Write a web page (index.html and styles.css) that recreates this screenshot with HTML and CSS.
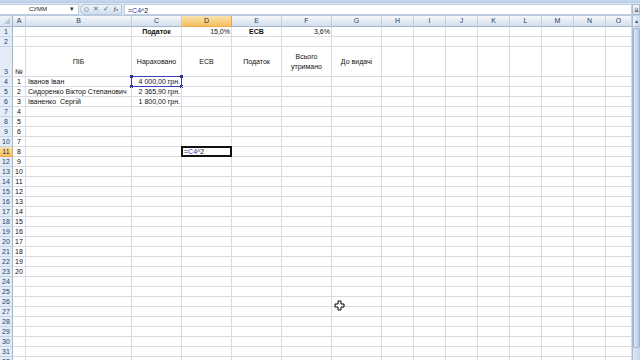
FILE: index.html
```html
<!DOCTYPE html>
<html lang="uk">
<head>
    <meta charset="UTF-8">
    <meta name="viewport" content="width=device-width, initial-scale=1.0">
    <title>Зарплата</title>
    <link rel="stylesheet" href="styles.css">
</head>
<body>
    <div class="app">
        <div class="ribbon"></div>
        <div class="fbar">
            <div class="namebox">
                <span class="name">СУММ</span>
                <span class="drop">&#9662;</span>
            </div>
            <div class="fbtns">
                <span class="grip"></span>
                <span class="fb x">&#10005;</span>
                <span class="fb ok">&#10003;</span>
                <span class="fb fx"><i>f</i><small>x</small></span>
            </div>
            <div class="formula">=<span class="ref">C4</span>^2</div>
            <div class="expand">&#8650;</div>
        </div>
        <div class="main">
            <div class="sheet" id="sheet"></div>
            <div class="vscroll">
                <div class="up">&#9652;</div>
                <div class="thumb"></div>
            </div>
        </div>
        <svg class="cursor" width="11" height="11" viewBox="0 0 11 11">
            <path d="M4 1h3v3h3v3h-3v3h-3v-3h-3v-3h3z" fill="#fff" stroke="#000" stroke-width="1"/>
        </svg>
    </div>
    <script>
        var cols = ["A", "B", "C", "D", "E", "F", "G", "H", "I", "J", "K", "L", "M", "N", "O"];
        var rowsCount = 32;
        var cells = {
            C1: { t: "Податок", c: "b mid" },
            D1: { t: "15,0%", c: "num" },
            E1: { t: "ЕСВ", c: "b mid" },
            F1: { t: "3,6%", c: "num" },
            A3: { t: "№", c: "mid bottom" },
            B3: { t: "ПІБ", c: "mid vmid" },
            C3: { t: "Нараховано", c: "mid vmid" },
            D3: { t: "ЕСВ", c: "mid vmid" },
            E3: { t: "Податок", c: "mid vmid" },
            F3: { t: "Всього утримано", c: "mid vmid wrap" },
            G3: { t: "До видачі", c: "mid vmid" },
            B4: { t: "Іванов Іван" },
            C4: { t: "4 000,00 грн.", c: "num refbox" },
            B5: { t: "Сидоренко Віктор Степанович" },
            C5: { t: "2 365,90 грн.", c: "num" },
            B6: { t: "Іваненко &nbsp;Сергій" },
            C6: { t: "1 800,00 грн.", c: "num" },
            D11: { t: "=<span class=\"ref\">C4</span>^2", c: "active" }
        };
        for (let n = 1; n <= 20; n++) {
            cells["A" + (n + 3)] = { t: String(n), c: "mid" };
        }

        let str = `<div class="corner"><span></span></div>`;
        for (let i = 0; i < cols.length; i++) {
            let sel = cols[i] == "D" ? " hsel" : "";
            str += `<div class="ch${sel}">${cols[i]}</div>`;
        }
        for (let r = 1; r <= rowsCount; r++) {
            let sel = r == 11 ? " hsel" : "";
            let tall = r == 3 ? " bottom" : "";
            str += `<div class="rh${sel}${tall}">${r}</div>`;
            for (let i = 0; i < cols.length; i++) {
                let cell = cells[cols[i] + r];
                if (cell) {
                    let extra = cell.c == "num refbox" ? `<i class="h tl"></i><i class="h tr"></i><i class="h bl"></i><i class="h br"></i>` : "";
                    str += `<div class="cell ${cell.c || ""}"><span>${cell.t}</span>${extra}</div>`;
                } else {
                    str += `<div class="cell"></div>`;
                }
            }
        }
        document.getElementById("sheet").innerHTML = str;
    </script>
</body>
</html>
```

FILE: styles.css
```css
body {
    margin: 0;
    overflow: hidden;
    background: #fff;
    font-family: 'Liberation Sans', Arial, sans-serif;
    font-size: 7px;
    color: #000;
}
.app {
    position: relative;
    width: 640px;
    height: 360px;
    overflow: hidden;
}
.ribbon {
    height: 3px;
    background: linear-gradient(#c9d9ee, #b7cbe6);
}
.fbar {
    display: flex;
    align-items: center;
    height: 13px;
    background: #dbe6f4;
    border-bottom: 1px solid #b9c9de;
    box-sizing: border-box;
}
.namebox {
    display: flex;
    align-items: center;
    width: 79px;
    height: 11px;
    background: #fff;
    border: 1px solid #bfcde0;
    border-left: none;
    box-sizing: border-box;
}
.namebox .name {
    flex: 1;
    text-align: center;
    font-size: 6px;
    color: #222;
    padding-left: 6px;
}
.namebox .drop {
    width: 8px;
    font-size: 7px;
    color: #333;
}
.fbtns {
    display: flex;
    align-items: center;
    height: 11px;
    width: 42px;
    margin-left: 1px;
    border-radius: 6px 2px 2px 6px;
    background: linear-gradient(#eef3fa, #d2deee);
    border: 1px solid #b7c7dc;
    box-sizing: border-box;
}
.fbtns .grip {
    width: 5px;
    height: 5px;
    margin: 0 2px 0 3px;
    border: 1px solid #9aaac0;
    border-radius: 50%;
    box-sizing: border-box;
}
.fbtns .fb {
    width: 10px;
    text-align: center;
    font-size: 7px;
    color: #5d6f88;
}
.fbtns .ok {
    color: #4a6a8c;
}
.fbtns .fx {
    font-family: 'Liberation Serif', serif;
    color: #333;
}
.fbtns .fx small {
    font-size: 5px;
}
.formula {
    flex: 1;
    height: 11px;
    line-height: 11px;
    margin-left: 2px;
    padding-left: 3px;
    background: #fff;
    border: 1px solid #bfcde0;
    box-sizing: border-box;
    color: #111;
}
.expand {
    width: 8px;
    height: 11px;
    line-height: 10px;
    text-align: center;
    font-size: 6px;
    color: #333;
    background: linear-gradient(#f4f7fb, #d6e0ee);
    border: 1px solid #a8b9d0;
    box-sizing: border-box;
}
.ref {
    color: #2b37b8;
}
.main {
    display: flex;
    height: 344px;
}
.sheet {
    display: grid;
    grid-template-columns: 13px 13px 106px repeat(5, 50px) repeat(7, 32px) 26px;
    grid-template-rows: 11px 10px 10px 30px repeat(29, 10px);
    width: 632px;
    overflow: hidden;
}
.corner {
    position: relative;
    background: linear-gradient(#eef2f8, #d9e2ee);
    border-right: 1px solid #9eb6ce;
    border-bottom: 1px solid #9eb6ce;
    box-sizing: border-box;
}
.corner span {
    position: absolute;
    right: 2px;
    bottom: 2px;
    border-left: 6px solid transparent;
    border-bottom: 6px solid #b6c6da;
}
.ch {
    text-align: center;
    line-height: 10px;
    color: #27415f;
    background: linear-gradient(#f7f9fc, #e1e8f1 60%, #d6dfea);
    border-right: 1px solid #c2cfdf;
    border-bottom: 1px solid #9eb6ce;
    box-sizing: border-box;
}
.rh {
    display: flex;
    align-items: center;
    justify-content: center;
    color: #27415f;
    background: #e4ecf7;
    border-right: 1px solid #9eb6ce;
    border-bottom: 1px solid #c5d2e3;
    box-sizing: border-box;
}
.rh.bottom {
    align-items: flex-end;
    padding-bottom: 1px;
}
.hsel {
    background: linear-gradient(#fbe2b0, #f7cf80 55%, #f3c262);
    border-color: #f0a94a;
    color: #2a2a2a;
}
.cell {
    position: relative;
    display: flex;
    align-items: center;
    padding: 0 2px;
    white-space: nowrap;
    border-right: 1px solid #d9dde3;
    border-bottom: 1px solid #d9dde3;
    box-sizing: border-box;
    color: #111;
}
.cell.b {
    font-weight: bold;
}
.cell.mid {
    justify-content: center;
    text-align: center;
}
.cell.num {
    justify-content: flex-end;
    padding-right: 1px;
}
.cell.bottom {
    align-items: flex-end;
    padding-bottom: 1px;
}
.cell.wrap {
    white-space: normal;
    line-height: 10px;
    padding: 0 8px;
}
.cell.refbox {
    border: 1px solid #3d3fb3;
    margin: -1px 0 0 -1px;
    width: calc(100% + 1px);
    height: calc(100% + 1px);
}
.cell .h {
    position: absolute;
    width: 3px;
    height: 3px;
    background: #2f318f;
}
.h.tl { left: -2px; top: -2px; }
.h.tr { right: -2px; top: -2px; }
.h.bl { left: -2px; bottom: -2px; }
.h.br { right: -2px; bottom: -2px; }
.cell.active {
    border: 2px solid #111;
    margin: -1px 0 0 -1px;
    width: calc(100% + 1px);
    height: calc(100% + 1px);
    padding-left: 1px;
}
.vscroll {
    width: 8px;
    background: linear-gradient(90deg, #dfe8f4, #c8d6ea);
    border-left: 1px solid #a9bcd5;
    box-sizing: border-box;
}
.vscroll .up {
    height: 10px;
    line-height: 10px;
    text-align: center;
    font-size: 6px;
    color: #3a4f6e;
    background: linear-gradient(90deg, #eef3fa, #cbd9ec);
    border-bottom: 1px solid #a9bcd5;
}
.vscroll .thumb {
    height: 320px;
    margin: 1px 0;
    background: linear-gradient(90deg, #dde7f4, #b8cae2);
    border: 1px solid #9fb4d0;
    border-radius: 2px;
    box-sizing: border-box;
}
.cursor {
    position: absolute;
    left: 334px;
    top: 300px;
}
```
